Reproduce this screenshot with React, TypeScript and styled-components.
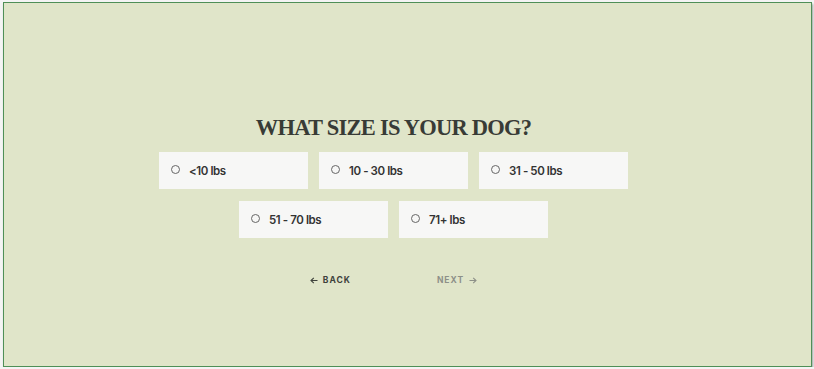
import React, { useState } from "react";
import styled, { createGlobalStyle } from "styled-components";

const GlobalStyle = createGlobalStyle`
  html, body {
    margin: 0;
    padding: 0;
    background: #f4f4f4;
  }
`;

const Frame = styled.div`
  box-sizing: border-box;
  margin: 2px 2px 0 3px;
  width: 809px;
  height: 365px;
  border: 1px solid #4f8f57;
  box-shadow: 1px 2px 2px rgba(0, 0, 0, 0.35);
  background: #e0e5c9;
  display: flex;
  flex-direction: column;
  align-items: center;
  padding: 111px 28px 0 0;
`;

const Title = styled.h1`
  margin: 0 0 10px;
  font-family: "Liberation Serif", "Times New Roman", serif;
  font-weight: 700;
  font-size: 22.5px;
  line-height: 28px;
  color: #383b36;
  letter-spacing: -0.75px;
`;

const Options = styled.div`
  display: flex;
  flex-wrap: wrap;
  justify-content: center;
  gap: 12px 11px;
  width: 470px;
`;

const Card = styled.label<{ $selected: boolean }>`
  box-sizing: border-box;
  width: 149px;
  height: 37px;
  background: #f7f7f6;
  display: flex;
  align-items: center;
  padding: 0 0 0 12px;
  gap: 9px;
  cursor: pointer;
  outline: ${(p) => (p.$selected ? "1px solid #6b7a4e" : "none")};
`;

const Radio = styled.span<{ $selected: boolean }>`
  box-sizing: border-box;
  width: 9px;
  height: 9px;
  border-radius: 50%;
  border: 1px solid #666;
  background: ${(p) => (p.$selected ? "#444" : "transparent")};
  margin-top: -2px;
`;

const Label = styled.span`
  font-family: "Inter", "Liberation Sans", sans-serif;
  font-weight: 600;
  font-size: 11.5px;
  color: #333;
  letter-spacing: -0.4px;
`;

const Nav = styled.div`
  display: flex;
  gap: 86px;
  margin-top: 37px;
`;

const NavButton = styled.button<{ $muted?: boolean }>`
  background: none;
  border: none;
  padding: 0;
  display: flex;
  align-items: center;
  gap: 5px;
  font-family: "Inter", "Liberation Sans", sans-serif;
  font-weight: 700;
  font-size: 8.5px;
  letter-spacing: 1px;
  color: ${(p) => (p.$muted ? "#8d9088" : "#3f423c")};
  cursor: pointer;
`;

const Arrow = ({ dir }: { dir: "left" | "right" }) => (
  <svg width="8" height="7" viewBox="0 0 8 7" fill="none" stroke="currentColor" strokeWidth="1.1">
    {dir === "left" ? (
      <path d="M7.5 3.5H1M3.8 0.8L1 3.5l2.8 2.7" />
    ) : (
      <path d="M0.5 3.5H7M4.2 0.8L7 3.5 4.2 6.2" />
    )}
  </svg>
);

const sizes = ["<10 lbs", "10 - 30 lbs", "31 - 50 lbs", "51 - 70 lbs", "71+ lbs"];

export default function App() {
  const [selected, setSelected] = useState<number | null>(null);
  return (
    <>
      <GlobalStyle />
      <Frame>
        <Title>WHAT SIZE IS YOUR DOG?</Title>
        <Options>
          {sizes.map((s, i) => (
            <Card key={s} $selected={selected === i} onClick={() => setSelected(i)}>
              <Radio $selected={selected === i} />
              <Label>{s}</Label>
            </Card>
          ))}
        </Options>
        <Nav>
          <NavButton>
            <Arrow dir="left" />
            BACK
          </NavButton>
          <NavButton $muted>
            NEXT
            <Arrow dir="right" />
          </NavButton>
        </Nav>
      </Frame>
    </>
  );
}
